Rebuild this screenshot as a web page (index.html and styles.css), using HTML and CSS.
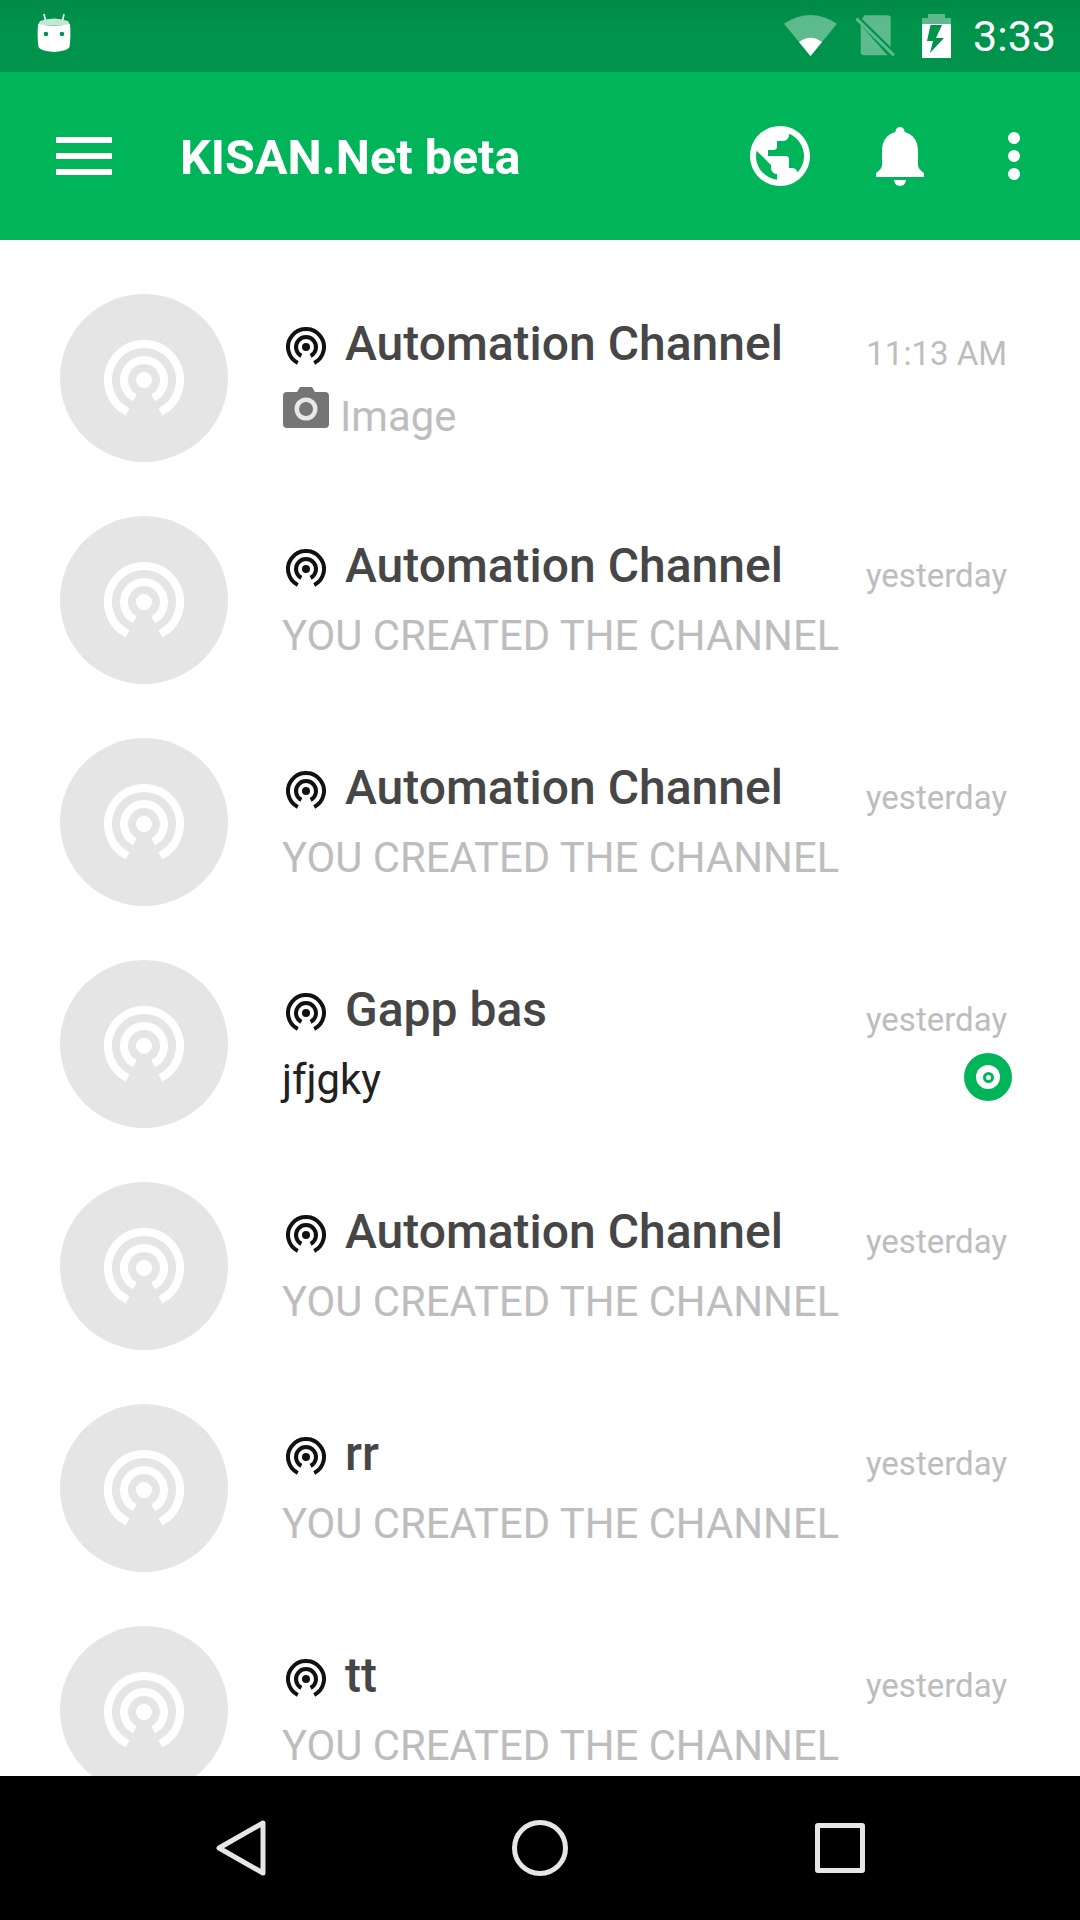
FILE: index.html
```html
<!DOCTYPE html>
<html lang="en">
<head>
<meta charset="UTF-8" />
<meta name="viewport" content="width=device-width, initial-scale=1" />
<title>KISAN.Net beta</title>
<link rel="stylesheet" href="styles.css">
</head>
<body>

<svg class="defs" width="0" height="0">
  <symbol id="channel" viewBox="-20 -20 40 40">
    <path d="M-8.2 16 A18 18 0 1 1 8.2 16" fill="none" stroke="currentColor" stroke-width="4" />
    <path d="M-4.6 8.9 A10 10 0 1 1 4.6 8.9" fill="none" stroke="currentColor" stroke-width="4" />
    <circle r="4" fill="currentColor" />
  </symbol>
</svg>

<div class="status">
  <svg class="st-android" viewBox="0 0 34 40">
    <path d="M7 1 L9 10 M27 1 L25 10" stroke="#fff" stroke-width="1.6" fill="none" />
    <path d="M3 8 Q17 3 31 8 L33 12 H1 Z" fill="#c4e6d4" />
    <path d="M1 11 Q17 14 33 11 Q34 24 32.500 34 Q31 38 17 39 Q3 38 1.500 34 Q0 24 1 11 Z" fill="#fff" />
    <circle cx="9" cy="21" r="2.300" fill="#00934c" />
    <circle cx="25" cy="21" r="2.300" fill="#00934c" />
  </svg>
  <div class="st-right">
    <svg class="st-wifi" viewBox="0 0 53 41">
      <path d="M0 8.700 Q26.500 -8.700 53 8.700 L26.500 41 Z" fill="#fff" opacity="0.37" />
      <path d="M15 27 Q26.500 18.400 38 27 L26.500 41 Z" fill="#fff" />
    </svg>
    <svg class="st-sim" viewBox="0 0 39 42">
      <path d="M8.500 0.300 H32 Q34.700 0.300 34.700 3 V32 L6 4 Z" fill="#fff" opacity="0.37" />
      <path d="M4.700 10 V37.300 Q4.700 40.300 7.700 40.300 H31.500 Z" fill="#fff" opacity="0.37" />
      <path d="M0.300 3.700 L38 40.300" stroke="#fff" stroke-width="3" opacity="0.37" />
    </svg>
    <svg class="st-batt" viewBox="0 0 29 44">
      <path d="M6 0 H23 V4 H29 V10 H0 V4 H6 Z" fill="#fff" opacity="0.37" />
      <path d="M0 10 H29 V44 H0 Z M8.500 11 H20 L14 24 H22 L8 39 L11 27 H5 Z" fill="#fff" fill-rule="evenodd" />
    </svg>
    <span class="st-time">3:33</span>
  </div>
</div>

<header class="appbar">
  <div class="burger"><i></i><i></i><i></i></div>
  <div class="appname">KISAN.Net beta</div>
  <svg class="ic-globe" viewBox="0 0 24 24">
    <path fill="#fff" d="M12 2C6.480 2 2 6.480 2 12s4.480 10 10 10 10-4.480 10-10S17.520 2 12 2zm-1 17.930c-3.950-.490-7-3.850-7-7.930 0-.620.080-1.210.210-1.790L9 15v1c0 1.100.900 2 2 2v1.930zm6.900-2.540c-.260-.810-1-1.390-1.900-1.390h-1v-3c0-.550-.450-1-1-1H8v-2h2c.550 0 1-.450 1-1V7h2c1.100 0 2-.900 2-2v-.410c2.930 1.190 5 4.060 5 7.410 0 2.080-.800 3.970-2.100 5.390z" />
  </svg>
  <svg class="ic-bell" viewBox="0 0 48 59">
    <path fill="#fff" d="M24 0a4.500 4.500 0 0 1 4.500 4.500V5C37 7 42 14 42 24V38Q42 42 48 46V50H0V46Q6 42 6 38V24C6 14 11 7 19.500 5V4.500A4.500 4.500 0 0 1 24 0Z" />
    <path fill="#fff" d="M18 53H30A6 6 0 0 1 18 53Z" />
  </svg>
  <div class="more"><i></i><i></i><i></i></div>
</header>

<main class="list">
  <div class="row">
    <div class="avatar"><svg class="avatar-ic"><use href="#channel" /></svg></div>
    <div class="body">
      <div class="title"><svg class="title-ic"><use href="#channel" /></svg>Automation Channel</div>
      <div class="sub photo">
        <svg class="camera" viewBox="0 0 46 41">
          <path fill="#757575" d="M14 5 L17 0 H29 L32 5 H42 Q46 5 46 9 V37 Q46 41 42 41 H4 Q0 41 0 37 V9 Q0 5 4 5 Z" />
          <circle cx="23" cy="22" r="11.500" fill="#e8e8e8" />
          <circle cx="23" cy="22" r="7" fill="#757575" />
        </svg>
        Image
      </div>
    </div>
    <div class="side"><div class="when">11:13 AM</div></div>
  </div>

  <div class="row">
    <div class="avatar"><svg class="avatar-ic"><use href="#channel" /></svg></div>
    <div class="body">
      <div class="title"><svg class="title-ic"><use href="#channel" /></svg>Automation Channel</div>
      <div class="sub">YOU CREATED THE CHANNEL</div>
    </div>
    <div class="side"><div class="when">yesterday</div></div>
  </div>

  <div class="row">
    <div class="avatar"><svg class="avatar-ic"><use href="#channel" /></svg></div>
    <div class="body">
      <div class="title"><svg class="title-ic"><use href="#channel" /></svg>Automation Channel</div>
      <div class="sub">YOU CREATED THE CHANNEL</div>
    </div>
    <div class="side"><div class="when">yesterday</div></div>
  </div>

  <div class="row">
    <div class="avatar"><svg class="avatar-ic"><use href="#channel" /></svg></div>
    <div class="body">
      <div class="title"><svg class="title-ic"><use href="#channel" /></svg>Gapp bas</div>
      <div class="sub unread">jfjgky</div>
    </div>
    <div class="side">
      <div class="when">yesterday</div>
      <div class="badge"><i></i></div>
    </div>
  </div>

  <div class="row">
    <div class="avatar"><svg class="avatar-ic"><use href="#channel" /></svg></div>
    <div class="body">
      <div class="title"><svg class="title-ic"><use href="#channel" /></svg>Automation Channel</div>
      <div class="sub">YOU CREATED THE CHANNEL</div>
    </div>
    <div class="side"><div class="when">yesterday</div></div>
  </div>

  <div class="row">
    <div class="avatar"><svg class="avatar-ic"><use href="#channel" /></svg></div>
    <div class="body">
      <div class="title"><svg class="title-ic"><use href="#channel" /></svg>rr</div>
      <div class="sub">YOU CREATED THE CHANNEL</div>
    </div>
    <div class="side"><div class="when">yesterday</div></div>
  </div>

  <div class="row">
    <div class="avatar"><svg class="avatar-ic"><use href="#channel" /></svg></div>
    <div class="body">
      <div class="title"><svg class="title-ic"><use href="#channel" /></svg>tt</div>
      <div class="sub">YOU CREATED THE CHANNEL</div>
    </div>
    <div class="side"><div class="when">yesterday</div></div>
  </div>
</main>

<footer class="navbar">
  <svg class="nav-back" viewBox="0 0 50 56">
    <path d="M47 3 V53 L3 28 Z" fill="none" stroke="#e6e6e6" stroke-width="5" stroke-linejoin="round" />
  </svg>
  <div class="nav-home"></div>
  <div class="nav-recent"></div>
</footer>

</body>
</html>
```

FILE: styles.css
```css
* { box-sizing: border-box; }
html, body {
  margin: 0; padding: 0;
  width: 1080px; height: 1920px;
  overflow: hidden;
}
body {
  display: flex; flex-direction: column;
  background: white;
  font-family: Roboto, "Noto Sans", sans-serif;
}
.defs { position: absolute; }

.status {
  height: 72px;
  display: flex;
  align-items: center;
  justify-content: space-between;
  padding: 0 24px 0 37px;
  background: linear-gradient(#008a47, #00934c 40%);
}
.st-android { width: 34px; height: 40px; margin-top: -6px; }
.st-right { display: flex; align-items: center; }
.st-wifi { width: 53px; height: 41px; margin-top: -1px; }
.st-sim { width: 39px; height: 42px; margin-left: 19px; }
.st-batt { width: 29px; height: 44px; margin-left: 27px; }
.st-time { color: white; font-size: 43px; margin-left: 22px; }

.appbar {
  height: 168px;
  display: flex;
  align-items: center;
  background: #00b45a;
  padding-left: 56px;
}
.burger { width: 56px; display: flex; flex-direction: column; gap: 10px; }
.burger i { display: block; height: 6px; background: white; }
.appname {
  flex: 1;
  margin-left: 68px;
  margin-top: 2px;
  color: white;
  font-size: 48.500px;
  font-weight: 700;
}
.ic-globe { width: 72px; height: 72px; }
.ic-bell { width: 48px; height: 59px; margin-left: 60px; }
.more {
  display: flex; flex-direction: column; gap: 6px;
  margin-left: 84px;
  margin-right: 60px;
}
.more i { display: block; width: 12px; height: 12px; border-radius: 50%; background: white; }

.list {
  flex: 1;
  overflow: hidden;
  padding-top: 27px;
}
.row {
  height: 222px;
  display: flex;
  padding: 0 68px 0 60px;
}
.avatar {
  width: 168px; height: 168px;
  margin-top: 27px;
  flex-shrink: 0;
  border-radius: 50%;
  background: #e5e5e5;
  display: flex; align-items: center; justify-content: center;
  color: white;
}
.avatar-ic { width: 80px; height: 80px; margin-top: 3px; }
.body { flex: 1; margin-left: 55px; padding-top: 46px; }
.title {
  display: flex;
  align-items: center;
  height: 60px;
  font-size: 48px;
  font-weight: 500;
  color: #464646;
}
.title-ic { width: 40px; height: 40px; color: #111; margin: 7px 19px 0 3px; flex-shrink: 0; }
.sub {
  display: flex;
  align-items: center;
  gap: 11px;
  height: 60px;
  margin-top: 10px;
  margin-left: -1px;
  font-size: 41.800px;
  color: #bdbdbd;
  white-space: nowrap;
}
.sub.photo { margin-top: 13px; }
.sub.unread { color: #212121; }
.camera { width: 46px; height: 41px; margin-top: -17px; margin-left: 1px; }
.side {
  display: flex; flex-direction: column; align-items: flex-end;
  padding-top: 67px;
}
.when { font-size: 33px; line-height: 40px; color: #bdbdbd; margin-right: 5px; }
.badge {
  width: 48px; height: 48px;
  margin-top: 13px;
  border-radius: 50%;
  background: #00b45a;
  display: flex; align-items: center; justify-content: center;
  position: relative;
}
.badge::before {
  content: "";
  position: absolute;
  width: 24px; height: 24px;
  border-radius: 50%;
  background: white;
}
.badge i {
  position: relative;
  width: 11px; height: 11px;
  border: 3px solid #00b45a;
  border-radius: 50%;
  background: white;
}

.navbar {
  height: 144px;
  flex-shrink: 0;
  background: black;
  display: flex;
  align-items: center;
  position: relative;
  padding-left: 216px;
}
.nav-back { width: 50px; height: 56px; }
.nav-home {
  width: 56px; height: 56px;
  margin-left: 246px;
  border: 5px solid #e6e6e6;
  border-radius: 50%;
}
.nav-recent {
  width: 50px; height: 50px;
  margin-left: 247px;
  border: 5px solid #e6e6e6;
  border-radius: 3px;
}
```
